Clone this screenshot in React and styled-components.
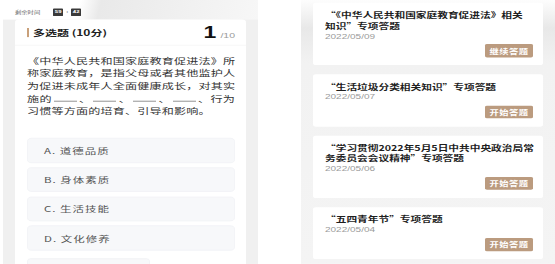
import React from "react";
import styled, { createGlobalStyle } from "styled-components";

const Global = createGlobalStyle`
  html, body { margin: 0; padding: 0; background: #fff; overflow: hidden; }
  body { width: 555px; height: 264px; font-family: "Noto Sans CJK SC", "Noto Sans", sans-serif; }
`;

/* The reference is two phone screenshots squeezed vertically; the stage is laid out
   at natural proportions and squeezed with one scaleY. */
const Stage = styled.div`
  width: 555px;
  height: 377px;
  transform: scaleY(0.7);
  transform-origin: 0 0;
  display: flex;
  background: #fff;
  overflow: hidden;
`;

const LeftPanel = styled.section`
  margin-left: 3px;
  width: 255px;
  height: 100%;
  display: flex;
  flex-direction: column;
  background: #f0f0f0;
`;

const TimerBar = styled.div`
  height: 28px;
  flex: none;
  box-sizing: border-box;
  padding: 6px 0 0 12px;
  display: flex;
  align-items: center;
  gap: 2px;
  background: linear-gradient(100deg, #fff 0, #fff 30%, #e9e9e9 38%, #f7f7f7 100%);
`;

const TimerLabel = styled.span`
  font-size: 6.3px;
  color: #666;
  margin-right: 11px;
`;

const TimeBox = styled.span`
  display: inline-flex;
  align-items: center;
  justify-content: center;
  width: 10px;
  height: 11px;
  border-radius: 1px;
  background: #3a3a3a;
  color: #fff;
  font: bold 6px "Liberation Sans", sans-serif;
`;

const Colon = styled.span`
  font: bold 6px "Liberation Sans", sans-serif;
  color: #333;
  margin: 0 1px;
`;

const QuizCard = styled.div`
  margin: 0 12px;
  flex: 1;
  background: #fff;
  border-radius: 4px 4px 0 0;
  display: flex;
  flex-direction: column;
  overflow: hidden;
`;

const QuizHead = styled.div`
  height: 36px;
  flex: none;
  padding: 0 11px 0 12px;
  display: flex;
  align-items: center;
  justify-content: space-between;
  border-bottom: 1px solid #f4f4f4;
`;

const QuizType = styled.div`
  display: flex;
  align-items: center;
  gap: 4px;
  font-size: 12px;
  font-weight: bold;
  color: #222;
`;

const Bar = styled.span`
  width: 2px;
  height: 13px;
  background: #c9a07a;
`;

const Counter = styled.div`
  display: flex;
  align-items: baseline;
  font-family: "Liberation Sans", sans-serif;
`;

const Current = styled.span`
  font-size: 23px;
  font-weight: bold;
  color: #111;
  line-height: 1;
`;

const Total = styled.span`
  font-size: 10.5px;
  color: #999;
  margin-left: 4px;
`;

const Question = styled.div`
  padding: 12px 11px 0 12px;
  font-size: 12.1px;
  line-height: 18px;
  color: #333;
`;

const QLine = styled.div`
  text-align: justify;
  text-align-last: ${(p) => (p.$last ? "left" : "justify")};
  white-space: nowrap;
  letter-spacing: ${(p) => (p.$last ? "0.15px" : "0")};
`;

const Blank = styled.span`
  display: inline-block;
  width: 23px;
  height: 11px;
  margin: 0 2px;
  border-bottom: 1px solid #666;
`;

const Options = styled.div`
  margin: 30px 11px 0 12px;
  display: flex;
  flex-direction: column;
  gap: 6.3px;
`;

const Option = styled.div`
  height: 35.5px;
  box-sizing: border-box;
  padding-left: 16px;
  display: flex;
  align-items: center;
  border-radius: 5px;
  background: #f7f8fa;
  border: 1px solid #f1f2f5;
  font-size: 11.5px;
  letter-spacing: 1px;
  color: #555;
`;

const SubmitStub = styled.div`
  margin: 11.6px 0 0 12px;
  width: 121px;
  height: 30px;
  flex: none;
  border-radius: 4px;
  background: #f7f8fa;
  border: 1px solid #f0f1f4;
`;

const RightPanel = styled.section`
  margin-left: 43px;
  width: 254px;
  height: 100%;
  box-sizing: border-box;
  padding: 4px 12px 0 12px;
  display: flex;
  flex-direction: column;
  gap: 13px;
  background: linear-gradient(180deg, #fdfdfd 0, #e8e8e8 40px, #f2f2f2 90px, #f4f4f4 100%);
`;

const TopicCard = styled.div`
  background: #fff;
  border-radius: 3px;
  padding: 9.5px 10px 11.4px 12px;
  display: flex;
  flex-direction: column;
`;

const TopicTitle = styled.div`
  font-size: 10.7px;
  font-weight: bold;
  line-height: 15px;
  color: #1e1e1e;
`;

const TitleLine = styled.span`
  display: block;
  white-space: nowrap;
`;

const TopicDate = styled.div`
  font-family: "Liberation Sans", sans-serif;
  font-size: 10px;
  line-height: 16.8px;
  color: #9a9a9a;
`;

const ActionButton = styled.div`
  align-self: flex-end;
  margin-top: 3px;
  width: 48px;
  height: 18.6px;
  border-radius: 2px;
  background: #bb9b7f;
  color: #fff;
  font-size: 9.3px;
  font-weight: bold;
  letter-spacing: 0.5px;
  display: flex;
  align-items: center;
  justify-content: center;
`;

const topics = [
  { lines: ["“《中华人民共和国家庭教育促进法》相关", "知识”专项答题"], date: "2022/05/09", action: "继续答题" },
  { lines: ["“生活垃圾分类相关知识”专项答题"], date: "2022/05/07", action: "开始答题" },
  { lines: ["“学习贯彻2022年5月5日中共中央政治局常", "务委员会会议精神”专项答题"], date: "2022/05/06", action: "开始答题" },
  { lines: ["“五四青年节”专项答题"], date: "2022/05/04", action: "开始答题" },
];

const options = ["A. 道德品质", "B. 身体素质", "C. 生活技能", "D. 文化修养"];

export default function App() {
  return (
    <>
      <Global />
      <Stage>
        <LeftPanel>
          <TimerBar>
            <TimerLabel>剩余时间</TimerLabel>
            <TimeBox>59</TimeBox>
            <Colon>:</Colon>
            <TimeBox>42</TimeBox>
          </TimerBar>
          <QuizCard>
            <QuizHead>
              <QuizType>
                <Bar />
                多选题 (10分)
              </QuizType>
              <Counter>
                <Current>1</Current>
                <Total>/10</Total>
              </Counter>
            </QuizHead>
            <Question>
              <QLine>《中华人民共和国家庭教育促进法》所</QLine>
              <QLine>称家庭教育，是指父母或者其他监护人</QLine>
              <QLine>为促进未成年人全面健康成长，对其实</QLine>
              <QLine>
                施的<Blank />、<Blank />、<Blank />、<Blank />、行为
              </QLine>
              <QLine $last>习惯等方面的培育、引导和影响。</QLine>
            </Question>
            <Options>
              {options.map((o) => (
                <Option key={o}>{o}</Option>
              ))}
            </Options>
            <SubmitStub />
          </QuizCard>
        </LeftPanel>
        <RightPanel>
          {topics.map((t) => (
            <TopicCard key={t.date}>
              <TopicTitle>
                {t.lines.map((l) => (
                  <TitleLine key={l}>{l}</TitleLine>
                ))}
              </TopicTitle>
              <TopicDate>{t.date}</TopicDate>
              <ActionButton>{t.action}</ActionButton>
            </TopicCard>
          ))}
        </RightPanel>
      </Stage>
    </>
  );
}
